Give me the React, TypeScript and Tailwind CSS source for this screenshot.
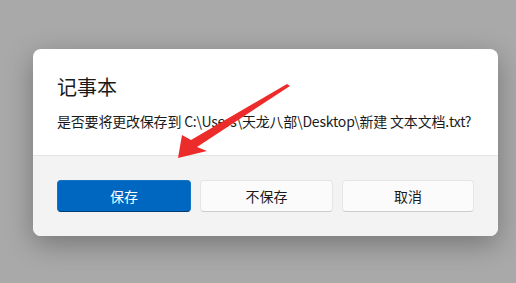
export default function App() {
  return (
    <div className="relative w-[516px] h-[283px] overflow-hidden bg-[#a9a9a9] pt-[49px] pl-[33px] font-['Noto_Sans_CJK_SC',sans-serif]">
      <div className="w-[465px] rounded-lg overflow-hidden bg-white shadow-[0_8px_28px_rgba(0,0,0,0.3)]">
        <div className="px-6 pt-6 pb-6">
          <div className="text-[20px] leading-[28px] text-[#1b1b1b]">记事本</div>
          <div className="mt-[10px] text-[14px] leading-5 text-[#1b1b1b] tracking-[-0.2px] whitespace-nowrap">
            是否要将更改保存到 C:\Users\天龙八部\Desktop\新建 文本文档.txt?
          </div>
        </div>
        <div className="bg-[#f3f3f3] border-t border-[#e5e5e5] px-6 pt-6 pb-6 flex gap-2">
          <button className="w-[134px] h-8 rounded-[4px] bg-[#0067c0] border border-[#1473c5] border-b-[#003e73] text-white text-[14px]">保存</button>
          <button className="w-[133px] h-8 rounded-[4px] bg-[#fbfbfb] border border-[#e5e5e5] border-b-[#cccccc] text-[#1b1b1b] text-[14px] ml-[1px]">不保存</button>
          <button className="w-[132px] h-8 rounded-[4px] bg-[#fbfbfb] border border-[#e5e5e5] border-b-[#cccccc] text-[#1b1b1b] text-[14px] ml-[1px]">取消</button>
        </div>
      </div>
      <svg className="absolute left-0 top-0" width="516" height="283" viewBox="0 0 516 283">
        <polygon
          points="178,158 182,135 191,140 287,84 290,86 197,147 207,151"
          fill="#ec2b2b"
        />
      </svg>
    </div>
  );
}
